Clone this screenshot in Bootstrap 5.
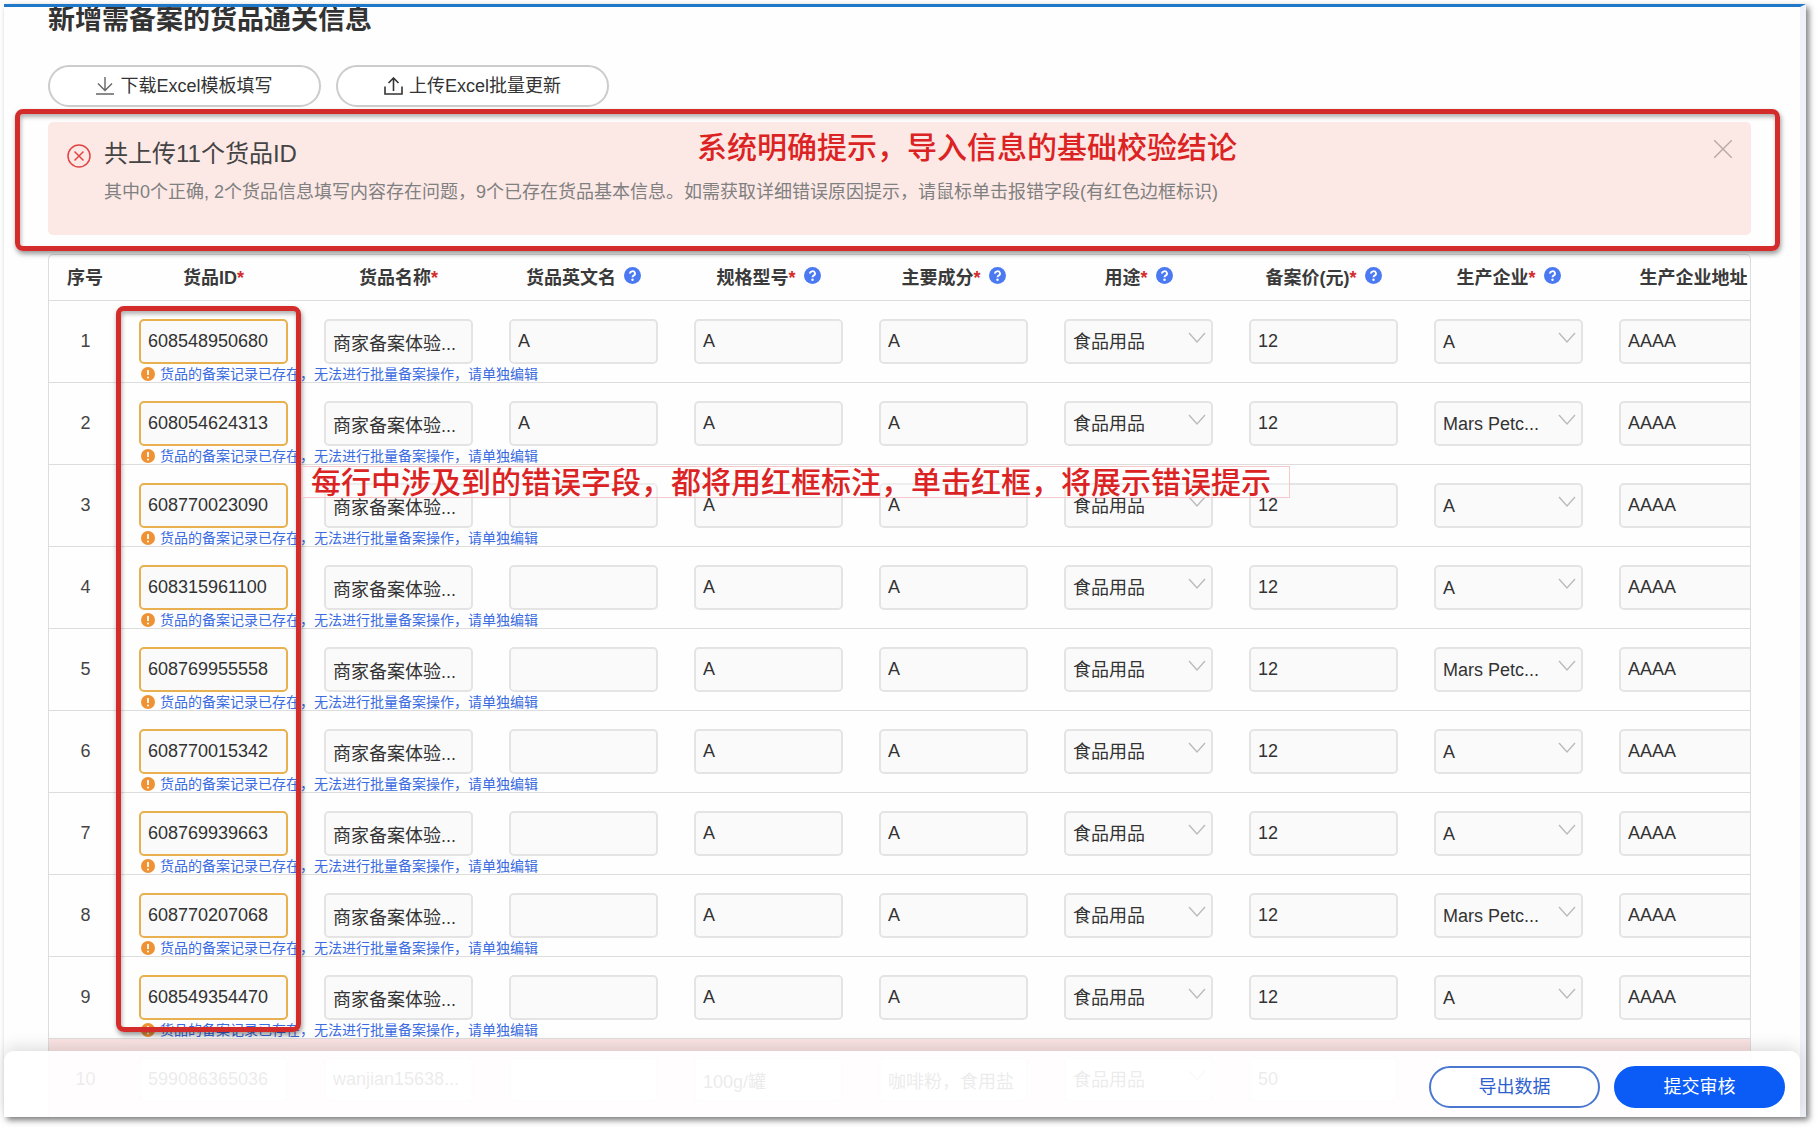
<!DOCTYPE html>
<html lang="zh-CN">
<head>
<meta charset="utf-8">
<meta name="viewport" content="width=device-width, initial-scale=1">
<title>货品通关信息</title>
<link href="https://cdn.jsdelivr.net/npm/bootstrap@5.3.0/dist/css/bootstrap.min.css" rel="stylesheet">
<style>
  body { font-family: "Liberation Sans", "Noto Sans CJK SC", sans-serif; font-size: 18px; color: #333; background: #fff; }
  .app-frame { height: calc(100vh - 17px); margin: 4px 13px 13px 4px; border-top: 3px solid #1f78c8; border-right: 6px solid #eef2f8; background: #fefefe; box-shadow: 3px 3px 6px rgba(0,0,0,.5); }
  .app-body { padding: 0 49px 0 44px; }
  .page-title { font-size: 27px; line-height: 26px; font-weight: 600; color: #333; margin-bottom: 32px; }
  .tool-row { gap: 15px; }
  .pill { height: 42px; font-size: 18px; line-height: 24px; padding: 0; border-width: 2px; }
  .pill-tool { width: 273px; border-color: #ccc; color: #333; background: #fff; gap: 6px; }
  .pill-action { width: 171px; }
  .pill-export { border-color: #4a78d0; color: #2f5fcf; background: #fff; }
  .pill-submit { background: #0b5cf7; border-color: #0b5cf7; color: #fff; }
  .result-alert { height: 113px; margin: 15px 0 19px; padding: 18px 19px; border: 0; border-radius: 5px; background: #fce9e6; color: #333; gap: 13px; }
  .result-title { font-size: 24px; line-height: 28px; margin-bottom: 10px; font-weight: 400; color: #444; }
  .result-text { font-size: 18px; line-height: 28px; color: #808080; white-space: nowrap; }
  .result-close { width: 18px; height: 18px; }
  .mark-box { border: 5px solid #d42b2b; border-radius: 8px; box-shadow: 1px 3px 5px rgba(0,0,0,.4), inset 1px 3px 4px rgba(0,0,0,.3); pointer-events: none; z-index: 2; }
  .mark-alert { inset: -13px -29px -16px -33px; }
  .mark-ids { left: 67px; top: 51px; width: 185px; height: 726px; }
  .note { color: #dc2323; font-size: 30px; line-height: 30px; font-weight: 500; white-space: nowrap; font-family: "Noto Sans CJK SC", sans-serif; z-index: 3; }
  .note-alert { left: 649px; top: 8px; }
  .note-rows { left: 253px; top: 211px; width: 988px; height: 32px; line-height: 26px; padding-left: 8px; border: 1px solid #f5c8cb; background: rgba(255,255,255,.35); }
  .grid-wrap { border: 1px solid #ddd; border-radius: 5px 5px 0 0; }
  .goods { width: 1737px; table-layout: fixed; margin: 0; border-collapse: separate; border-spacing: 0; --bs-table-bg: transparent; }
  .goods .col-no { width: 72px; }
  .goods > thead > tr > th { height: 46px; padding: 0; font-weight: 600; color: #3a3a3a; text-align: center; vertical-align: middle; white-space: nowrap; line-height: 26px; border-bottom: 1px solid #ddd; }
  .goods > tbody > tr > td { height: 82px; padding: 18px 18px 0; vertical-align: top; border-bottom: 1px solid #ddd; color: #333; }
  .goods > tbody > tr > td.seq { padding: 18px 0 0 1px; text-align: center; line-height: 45px; color: #444; }
  .goods > tbody > tr.row-error > td { background: #fbe4e3; }
  .req { color: #d42b2b; }
  .q-icon { margin-left: 8px; vertical-align: 0; }
  .cell-field { width: 149px; height: 45px; font-size: 18px; line-height: 24px; padding: 0 7px; border: 2px solid #e4e4e4; border-radius: 5px; background-color: #fafafa; color: #333; }
  select.cell-field { background-image: url("data:image/svg+xml,%3Csvg xmlns='http://www.w3.org/2000/svg' viewBox='0 0 18 12'%3E%3Cpath d='M1 1l8 9 8-9' fill='none' stroke='%23bbb' stroke-width='1.4'/%3E%3C/svg%3E"); background-size: 18px 12px; background-position: right 5px top 11px; }
  .cell-id { border-color: #e9b04f; }
  .tip { font-size: 14px; line-height: 16px; margin-top: 2px; gap: 5px; color: #3a6be0; white-space: nowrap; padding-left: 2px; }
  .action-bar { height: 66px; padding: 15px 15px 9px; gap: 14px; background: rgba(255,255,255,.9); border-radius: 10px 10px 0 0; box-shadow: 0 -4px 16px rgba(0,0,0,.13); z-index: 4; }
</style>
</head>
<body>
<div class="app-frame position-relative">
  <main class="app-body h-100 overflow-hidden">
    <h1 class="page-title">新增需备案的货品通关信息</h1>
    <div class="tool-row d-flex">
      <button type="button" class="btn rounded-pill pill pill-tool d-flex align-items-center justify-content-center">
        <svg width="18" height="18" viewBox="0 0 18 18" fill="none" stroke="#666" stroke-width="1.4"><path d="M9 0v13M2 6.500l7 7 7-7M0 17h18"/></svg>下载Excel模板填写
      </button>
      <button type="button" class="btn rounded-pill pill pill-tool d-flex align-items-center justify-content-center">
        <svg width="19" height="18" viewBox="0 0 19 18" fill="none" stroke="#333" stroke-width="1.6"><path d="M9.500 14V1.500M4.500 6l5-5 5 5M1 9.500V17h17V9.500"/></svg>上传Excel批量更新
      </button>
    </div>

    <section class="alert result-alert position-relative d-flex align-items-start" role="alert">
      <svg class="flex-shrink-0 mt-1" width="24" height="24" viewBox="0 0 24 24" fill="none" stroke="#e04545" stroke-width="1.5"><circle cx="12" cy="12" r="11"/><path d="M7.500 7.500l9 9M16.500 7.500l-9 9"/></svg>
      <div class="flex-grow-1">
        <h2 class="result-title">共上传11个货品ID</h2>
        <p class="result-text mb-0">其中0个正确, 2个货品信息填写内容存在问题，9个已存在货品基本信息。如需获取详细错误原因提示，请鼠标单击报错字段(有红色边框标识)</p>
      </div>
      <button type="button" class="btn p-0 border-0 result-close d-flex" aria-label="关闭">
        <svg width="18" height="18" viewBox="0 0 18 18" stroke="#b8a8a6" stroke-width="1.4"><path d="M0 0l18 18M18 0L0 18"/></svg>
      </button>
      <div class="note note-alert position-absolute">系统明确提示，导入信息的基础校验结论</div>
      <div class="mark-box mark-alert position-absolute"></div>
    </section>

    <section class="grid-wrap position-relative overflow-hidden">
      <table class="table goods">
        <thead><tr id="head"></tr></thead>
        <tbody id="rows"></tbody>
      </table>
      <div class="mark-box mark-ids position-absolute"></div>
      <div class="note note-rows position-absolute">每行中涉及到的错误字段，都将用红框标注，单击红框，将展示错误提示</div>
    </section>
  </main>
  <footer class="action-bar position-absolute bottom-0 start-0 end-0 d-flex justify-content-end">
    <button type="button" class="btn rounded-pill pill pill-action pill-export">导出数据</button>
    <button type="button" class="btn rounded-pill pill pill-action pill-submit">提交审核</button>
  </footer>
</div>
<script src="https://cdn.jsdelivr.net/npm/bootstrap@5.3.0/dist/js/bootstrap.bundle.min.js"></script>
<script>
  // [label, required, has help icon]
  const columns = [['货品ID',1,0],['货品名称',1,0],['货品英文名',0,1],['规格型号',1,1],['主要成分',1,1],['用途',1,1],['备案价(元)',1,1],['生产企业',1,1],['生产企业地址',0,0]];
  const help = '<svg class="q-icon" width="17" height="17" viewBox="0 0 17 17"><circle cx="8.500" cy="8.500" r="8.500" fill="#4b79f2"/><path d="M6 6.600a2.500 2.300 0 1 1 3.600 2c-.8.500-1.100.8-1.100 1.700" fill="none" stroke="#fff" stroke-width="1.800"/><circle cx="8.500" cy="12.700" r="1.200" fill="#fff"/></svg>';
  const warn = '<svg class="flex-shrink-0" width="14" height="14" viewBox="0 0 14 14"><circle cx="7" cy="7" r="7" fill="#ef9234"/><path d="M7 3v5" stroke="#fff" stroke-width="1.800"/><circle cx="7" cy="10.400" r="1" fill="#fff"/></svg>';
  document.getElementById('head').innerHTML = '<th class="col-no" scope="col">序号</th>' + columns.map(([t, r, q]) =>
    `<th scope="col">${t}${r ? '<span class="req">*</span>' : ''}${q ? help : ''}</th>`).join('');

  const ids = ['608548950680','608054624313','608770023090','608315961100','608769955558','608770015342','608769939663','608770207068','608549354470'];
  const data = ids.map((id, i) => [id, '商家备案体验...', i < 2 ? 'A' : '', 'A', 'A', '食品用品', '12', [1,4,7].includes(i) ? 'Mars Petc...' : 'A', 'AAAA']);
  data.push(['599086365036', 'wanjian15638...', '', '100g/罐', '咖啡粉，食用盐', '食品用品', '50', '', '']);
  document.getElementById('rows').innerHTML = data.map((row, i) => {
    const bad = i === 9;
    const cells = row.map((v, c) => {
      const label = `aria-label="第${i + 1}行 ${columns[c][0]}"`;
      if (c === 5 || c === 7) return `<td><select class="form-select cell-field" ${label}><option>${v}</option></select></td>`;
      const tip = c === 0 && !bad ? `<div class="tip d-flex align-items-center">${warn}<span>货品的备案记录已存在，无法进行批量备案操作，请单独编辑</span></div>` : '';
      return `<td><input type="text" class="form-control cell-field${c === 0 && !bad ? ' cell-id' : ''}" ${label} value="${v}">${tip}</td>`;
    }).join('');
    return `<tr class="${bad ? 'row-error' : ''}"><td class="seq">${i + 1}</td>${cells}</tr>`;
  }).join('');
</script>
</body>
</html>
